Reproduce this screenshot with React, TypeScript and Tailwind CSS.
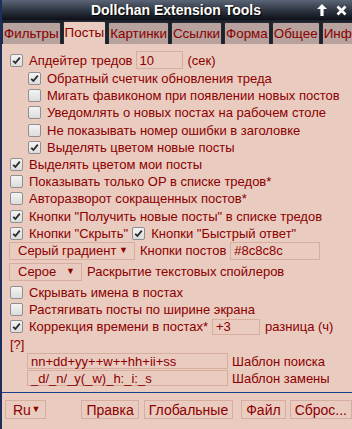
import React from "react";

const Check: React.FC<{ on?: boolean }> = ({ on }) => (
  <span className="inline-flex w-[13px] h-[13px] shrink-0 items-center justify-center rounded-[2px] border border-[#8f8f8f] bg-gradient-to-b from-[#f4f4f4] to-[#dcdcdc] mr-[6px]">
    {on && (
      <svg width="9" height="9" viewBox="0 0 9 9">
        <path d="M1.2 4.8 L3.4 7 L7.8 1.6" fill="none" stroke="#2b2b2b" strokeWidth="1.8" />
      </svg>
    )}
  </span>
);

const Row: React.FC<{ on?: boolean; indent?: boolean; children: React.ReactNode }> = ({ on, indent, children }) => (
  <div className={`flex items-center h-[17.2px] ${indent ? "pl-[26px]" : "pl-[8px]"}`}>
    <Check on={on} />
    <span>{children}</span>
  </div>
);

const Input: React.FC<{ value: string; w: string; h?: string }> = ({ value, w, h = "h-[18px]" }) => (
  <span className={`inline-flex items-center px-[3px] border border-[#d6ae9f] ${w} ${h}`}>{value}</span>
);

const Select: React.FC<{ value: string; w: string }> = ({ value, w }) => (
  <span className={`inline-flex items-center justify-between h-[18px] pl-[8px] pr-[6px] border border-[#d6ae9f] ${w}`}>
    <span>{value}</span>
    <span className="text-[9px]">▼</span>
  </span>
);

const tabs = ["Фильтры", "Посты", "Картинки", "Ссылки", "Форма", "Общее", "Инфо"];

export default function App() {
  return (
    <div className="w-[352px] h-[429px] overflow-hidden bg-[#eacbbf] text-[#8b0000] text-[13px] leading-none font-['Liberation_Sans',Arial,sans-serif] border-l-2 border-[#1c2f5c]">
      <div className="h-[20px] flex items-center relative bg-gradient-to-b from-[#5b6577] to-[#0d1018]">
        <div className="w-full text-center pr-[2px] text-white font-bold text-[14px] [text-shadow:1px_1px_1px_#000]">
          Dollchan Extension Tools
        </div>
        <div className="absolute right-[5px] top-[4px] flex gap-[9px] items-center">
          <svg width="10" height="12" viewBox="0 0 10 12">
            <path d="M5 0 L10 5 L6.6 5 L6.6 12 L3.4 12 L3.4 5 L0 5 Z" fill="#fff" />
          </svg>
          <svg width="11" height="11" viewBox="0 0 11 11">
            <path d="M1.5 1.5 L9.5 9.5 M9.5 1.5 L1.5 9.5" stroke="#fff" strokeWidth="2.6" />
          </svg>
        </div>
      </div>
      <div className="h-[24px] bg-[#1c212c] flex items-end gap-[2px] whitespace-nowrap text-[13.4px]">
        {tabs.map((t) => (
          <div
            key={t}
            className={`px-[1px] flex items-center border border-[#262a33] border-b-0 rounded-t-[2px] ${
              t === "Посты" ? "bg-[#eacbbf] h-[23px]" : "bg-[#b7a29d] h-[22px]"
            }`}
          >
            {t}
          </div>
        ))}
      </div>
      <div className="pt-[6px]">
        <div className="flex items-center h-[20px] pl-[8px]">
          <Check on />
          <span className="mr-[3px]">Апдейтер тредов</span>
          <Input value="10" w="w-[47px]" />
          <span className="ml-[5px]">(сек)</span>
        </div>
        <Row on indent>Обратный счетчик обновления треда</Row>
        <Row indent>Мигать фавиконом при появлении новых постов</Row>
        <Row indent>Уведомлять о новых постах на рабочем столе</Row>
        <Row indent>Не показывать номер ошибки в заголовке</Row>
        <Row on indent>Выделять цветом новые посты</Row>
        <Row on>Выделять цветом мои посты</Row>
        <Row>Показывать только OP в списке тредов*</Row>
        <Row>Авторазворот сокращенных постов*</Row>
        <Row on>Кнопки "Получить новые посты" в списке тредов</Row>
        <div className="flex items-center h-[17.2px] pl-[8px]">
          <Check on />
          <span className="mr-[4px]">Кнопки "Скрыть"</span>
          <Check on />
          <span>Кнопки "Быстрый ответ"</span>
        </div>
        <div className="flex items-center h-[18px] pl-[7px]">
          <Select value="Серый градиент" w="w-[126px]" />
          <span className="ml-[5px] mr-[4px]">Кнопки постов</span>
          <Input value="#8c8c8c" w="w-[90px]" />
        </div>
        <div className="flex items-center h-[18px] pl-[7px] mt-[3px]">
          <Select value="Серое" w="w-[73px]" />
          <span className="ml-[5px]">Раскрытие текстовых спойлеров</span>
        </div>
        <div className="h-[3px]" />
        <Row>Скрывать имена в постах</Row>
        <Row>Растягивать посты по ширине экрана</Row>
        <div className="flex items-center h-[17.2px] pl-[8px]">
          <Check on />
          <span className="mr-[4px]">Коррекция времени в постах*</span>
          <Input value="+3" w="w-[48px]" h="h-[16px]" />
          <span className="ml-[5px]">разница (ч)</span>
        </div>
        <div className="h-[17.2px] pl-[8px] flex items-center">[?]</div>
        <div className="flex items-center h-[17px] pl-[25px]">
          <Input value="nn+dd+yy++w++hh+ii+ss" w="w-[201px]" h="h-[16px]" />
          <span className="ml-[4px]">Шаблон поиска</span>
        </div>
        <div className="flex items-center h-[17px] pl-[25px]">
          <Input value="_d/_n/_y(_w)_h:_i:_s" w="w-[201px]" h="h-[16px]" />
          <span className="ml-[4px]">Шаблон замены</span>
        </div>
        <div className="mt-[5px] border-t border-[#1c3f8c]" />
        <div className="flex items-center h-[34px] pl-[3px] text-[14px]">
          <span className="inline-flex items-center justify-between h-[19px] w-[42px] pl-[7px] pr-[5px] border border-[#d6ae9f]">
            <span>Ru</span>
            <span className="text-[9px]">▼</span>
          </span>
          <span className="ml-[35px] inline-flex items-center h-[19px] px-[4px] border border-[#d6ae9f]">Правка</span>
          <span className="ml-[5px] inline-flex items-center h-[19px] px-[4px] border border-[#d6ae9f]">Глобальные</span>
          <span className="ml-[8px] inline-flex items-center h-[19px] px-[4px] border border-[#d6ae9f]">Файл</span>
          <span className="ml-[4px] inline-flex items-center h-[19px] px-[4px] border border-[#d6ae9f]">Сброс...</span>
        </div>
      </div>
    </div>
  );
}
